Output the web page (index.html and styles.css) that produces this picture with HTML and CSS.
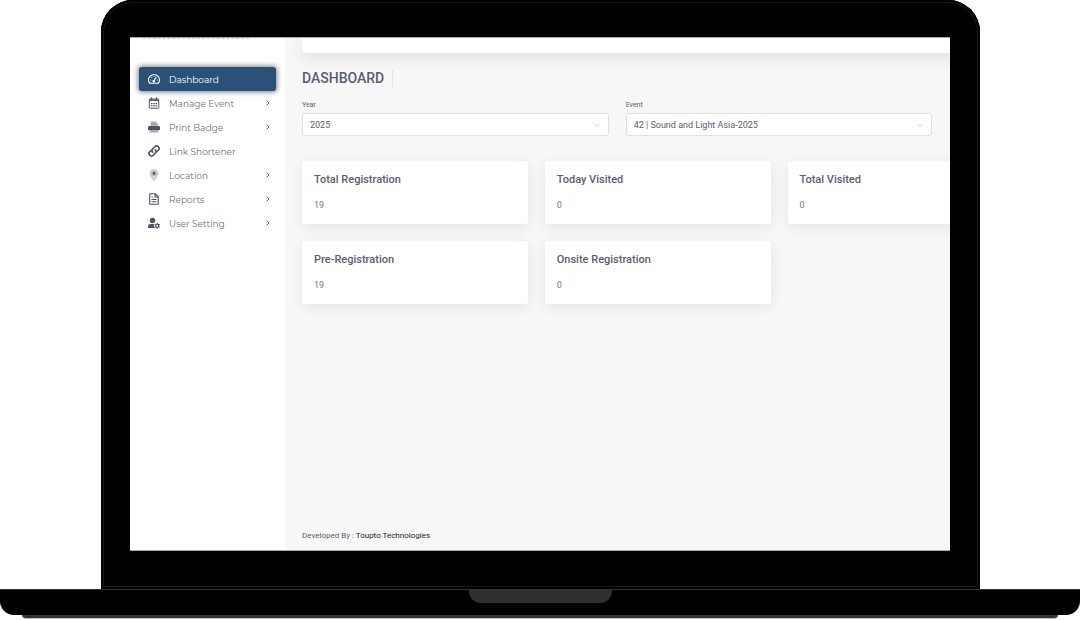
FILE: index.html
```html
<!DOCTYPE html>
<html lang="en">
<head>
    <meta charset="UTF-8">
    <meta name="viewport" content="width=device-width, initial-scale=1.0">
    <title>Dashboard</title>
    <link rel="stylesheet" href="styles.css">
</head>
<body>
    <div class="laptop">
        <div class="lid">
            <div class="screen">
                <aside class="sidebar">
                    <div class="brand-edge"></div>
                    <nav class="menu">
                        <a href="#" class="menu-item active">
                            <svg class="icon" viewBox="0 0 24 24" fill="none" stroke="currentColor" stroke-width="2.4" stroke-linecap="round" stroke-linejoin="round"><path d="M3.500 20.500A11 10.500 0 1 1 20.500 20.500Z"/><path d="M11.500 16l4.500-7M5.500 14h.1M7.500 9h.1M12 7h.1M18.500 14h.1"/><circle cx="11.500" cy="16.500" r="1.500"/></svg>
                            <span>Dashboard</span>
                        </a>
                        <a href="#" class="menu-item">
                            <svg class="icon" viewBox="0 0 24 24" fill="none" stroke="currentColor" stroke-width="2"><rect x="2.500" y="4" width="19" height="18.500" rx="1.500"/><path d="M2.500 6.500h19" stroke-width="3"/><path d="M7 .5v5M17 .5v5" stroke-width="2.500"/><path d="M6 13h3m1.500 0h3m1.500 0h3M6 17.500h3m1.500 0h3m1.500 0h3" stroke-width="2.500"/></svg>
                            <span>Manage Event</span>
                            <svg class="chevron" viewBox="0 0 8 8"><path d="M2.500 1.500l2.500 2.500-2.500 2.500"/></svg>
                        </a>
                        <a href="#" class="menu-item">
                            <svg class="icon" viewBox="0 0 24 24" fill="currentColor"><path d="M5 1h11l4 4v6H5z" opacity=".4"/><path d="M7 4h8M7 7h9" stroke="currentColor" opacity=".6"/><path d="M2.500 10h19Q24 10 24 12.500V18H0v-5.500Q0 10 2.500 10z"/><path d="M3 18h18v5H3z" opacity=".5"/></svg>
                            <span>Print Badge</span>
                            <svg class="chevron" viewBox="0 0 8 8"><path d="M2.500 1.500l2.500 2.500-2.500 2.500"/></svg>
                        </a>
                        <a href="#" class="menu-item">
                            <svg class="icon" viewBox="0 0 24 24" fill="none" stroke="currentColor" stroke-width="3.400" stroke-linecap="round"><path d="M9.500 14.500a5 5 0 0 1 0-7l4-4a4.950 4.950 0 0 1 7 7l-2.500 2.500"/><path d="M14.500 9.500a5 5 0 0 1 0 7l-4 4a4.950 4.950 0 0 1-7-7L6 11"/></svg>
                            <span>Link Shortener</span>
                        </a>
                        <a href="#" class="menu-item">
                            <svg class="icon" viewBox="0 0 24 24"><path d="M12 24C10 20 4 14 4 9a8 8 0 0 1 16 0c0 5-6 11-8 15z" fill="#d4d5d9" stroke="#b0b1b8"/><circle cx="12" cy="9" r="4.500" fill="#eee" stroke="#8b8d98"/><circle cx="12" cy="9" r="2.800" fill="#4b4e5d"/></svg>
                            <span>Location</span>
                            <svg class="chevron" viewBox="0 0 8 8"><path d="M2.500 1.500l2.500 2.500-2.500 2.500"/></svg>
                        </a>
                        <a href="#" class="menu-item">
                            <svg class="icon" viewBox="0 0 24 24" fill="none" stroke="currentColor" stroke-width="2.200" stroke-linejoin="round"><path d="M3.500 1.500h11l6 6v15h-17z"/><path d="M14 1.500V8h6.500M7 8h3M7 13h10M7 17.500h10"/></svg>
                            <span>Reports</span>
                            <svg class="chevron" viewBox="0 0 8 8"><path d="M2.500 1.500l2.500 2.500-2.500 2.500"/></svg>
                        </a>
                        <a href="#" class="menu-item">
                            <svg class="icon" viewBox="0 0 24 24" fill="currentColor"><circle cx="9" cy="7" r="5.500"/><path d="M0 22v-3.500Q0 14 5 14h7.500q-1.500 4 1 8z"/><circle cx="18.500" cy="17.500" r="3.200" fill="none" stroke="currentColor" stroke-width="2.400"/><path d="M18.500 11.500v2.500M18.500 21v2.500M13.300 14.500l2.200 1.300M21.500 19.200l2.200 1.300M13.300 20.500l2.200-1.300M21.500 15.800l2.200-1.300" stroke="currentColor" stroke-width="2"/></svg>
                            <span>User Setting</span>
                            <svg class="chevron" viewBox="0 0 8 8"><path d="M2.500 1.500l2.500 2.500-2.500 2.500"/></svg>
                        </a>
                    </nav>
                </aside>

                <main class="main">
                    <div class="topbar"></div>
                    <h1 class="page-title">DASHBOARD</h1>

                    <form class="filters">
                        <div class="field">
                            <label for="year">Year</label>
                            <div class="select-box">
                                <select id="year">
                                    <option>2025</option>
                                </select>
                                <svg class="arrow" viewBox="0 0 8 8"><path d="M1.500 3l2.500 2.500L6.500 3"/></svg>
                            </div>
                        </div>
                        <div class="field">
                            <label for="event">Event</label>
                            <div class="select-box">
                                <select id="event">
                                    <option>42 | Sound and Light Asia-2025</option>
                                </select>
                                <svg class="arrow" viewBox="0 0 8 8"><path d="M1.500 3l2.500 2.500L6.500 3"/></svg>
                            </div>
                        </div>
                    </form>

                    <section class="cards">
                        <div class="card">
                            <h2>Total Registration</h2>
                            <p>19</p>
                        </div>
                        <div class="card">
                            <h2>Today Visited</h2>
                            <p>0</p>
                        </div>
                        <div class="card">
                            <h2>Total Visited</h2>
                            <p>0</p>
                        </div>
                        <div class="card first">
                            <h2>Pre-Registration</h2>
                            <p>19</p>
                        </div>
                        <div class="card">
                            <h2>Onsite Registration</h2>
                            <p>0</p>
                        </div>
                    </section>

                    <footer class="footer">Developed By : <a href="#">Toupto Technologies</a></footer>
                </main>
            </div>
        </div>
        <div class="base">
            <div class="notch"></div>
        </div>
        <div class="feet"></div>
    </div>
</body>
</html>
```
FILE: styles.css
```css
* {
    margin: 0;
    padding: 0;
    box-sizing: border-box;
}
body {
    background: #fff;
    font-family: Roboto, sans-serif;
    font-size: 9px;
    color: #5a5d70;
}
a {
    color: inherit;
    text-decoration: none;
}

/* Laptop frame */
.laptop {
    min-height: 100vh;
    display: flex;
    flex-direction: column;
    padding-bottom: 1px;
}
.lid {
    flex: 1;
    display: flex;
    margin: 0 100px 0 101px;
    padding: 37px 30px 38px 29px;
    background: #000;
    border-radius: 32px 32px 0 0;
    box-shadow: inset 0 0 0 2px #000, inset 0 0 0 3px #161616;
}
.screen {
    flex: 1;
    min-width: 0;
    display: flex;
    overflow: hidden;
    background: #f7f7f7;
    border-top: 1px solid #aaa;
    border-bottom: 1px solid #aaa;
}
.base {
    height: 26px;
    background: #000;
    border-top: 1px solid #333;
    border-radius: 0 0 14px 14px;
}
.notch {
    width: 143px;
    height: 13px;
    margin: 0 auto;
    background: #30302e;
    border-radius: 0 0 12px 12px;
}
.feet {
    height: 4px;
    margin: 0 22px;
    background: #333;
    border-bottom: 1px solid #c8c4c4;
    border-radius: 0 0 4px 4px;
}

/* Sidebar */
.sidebar {
    flex: 0 0 155px;
    padding: 0 9px;
    background: #fff;
}
.brand-edge {
    width: 106px;
    margin: 0 4px 28px;
    border-top: 1px dashed #d0d1da;
}
.menu-item {
    height: 24px;
    display: flex;
    align-items: center;
    gap: 9px;
    padding: 0 4px 0 9px;
    border-radius: 3px;
    font-family: Montserrat, Inter, sans-serif;
    color: #6c6f80;
}
.menu-item span {
    flex: 1;
}
.menu-item.active {
    background: #2a5279;
    color: #fff;
    box-shadow: 0 0 5px 1px rgba(40, 40, 60, 0.6);
}
.icon {
    width: 12px;
    height: 12px;
    color: #4f5263;
}
.active .icon {
    color: #fff;
}
.chevron {
    width: 8px;
    height: 8px;
    fill: none;
    stroke: #62677a;
}

/* Main area, wider than the screen and cut at its right edge */
.main {
    flex: 1 0 988px;
    display: flex;
    flex-direction: column;
    padding: 0 17px;
    background: #f7f7f7;
}
.topbar {
    height: 15px;
    background: #fff;
    border-radius: 0 0 4px 4px;
    box-shadow: 0 4px 16px rgba(0, 0, 0, 0.1);
}
.page-title {
    align-self: flex-start;
    margin-top: 17px;
    padding-right: 8px;
    border-right: 1px solid #e2e2e2;
    font-size: 14px;
    line-height: 17px;
    font-weight: 500;
}
.filters {
    display: grid;
    grid-template-columns: repeat(3, 1fr);
    gap: 17px;
    margin-top: 13px;
}
.field label {
    display: block;
    font-size: 7px;
    line-height: 10px;
    margin-bottom: 3px;
}
.select-box {
    display: grid;
    align-items: center;
}
.select-box select,
.arrow {
    grid-area: 1 / 1;
}
.select-box select {
    width: 100%;
    height: 23px;
    padding: 0 7px;
    appearance: none;
    background: #fff;
    border: 1px solid #e0e0e2;
    border-radius: 3px;
    font: inherit;
    color: inherit;
}
.arrow {
    justify-self: end;
    width: 8px;
    height: 8px;
    margin-right: 8px;
    fill: none;
    stroke: #d4d4d4;
    pointer-events: none;
}
.cards {
    display: grid;
    grid-template-columns: repeat(4, 1fr);
    gap: 17px;
    margin-top: 25px;
}
.card {
    padding: 12px;
    background: #fff;
    border-radius: 3px;
    box-shadow: 0 3px 14px rgba(0, 0, 0, 0.08);
}
.card.first {
    grid-column-start: 1;
}
.card h2 {
    font-size: 11px;
    line-height: 14px;
    font-weight: 500;
}
.card p {
    margin-top: 12px;
    line-height: 13px;
    color: #757889;
}
.footer {
    margin-top: auto;
    padding-bottom: 8px;
    font-size: 8px;
    line-height: 13px;
}
.footer a {
    color: #181c32;
}
```
